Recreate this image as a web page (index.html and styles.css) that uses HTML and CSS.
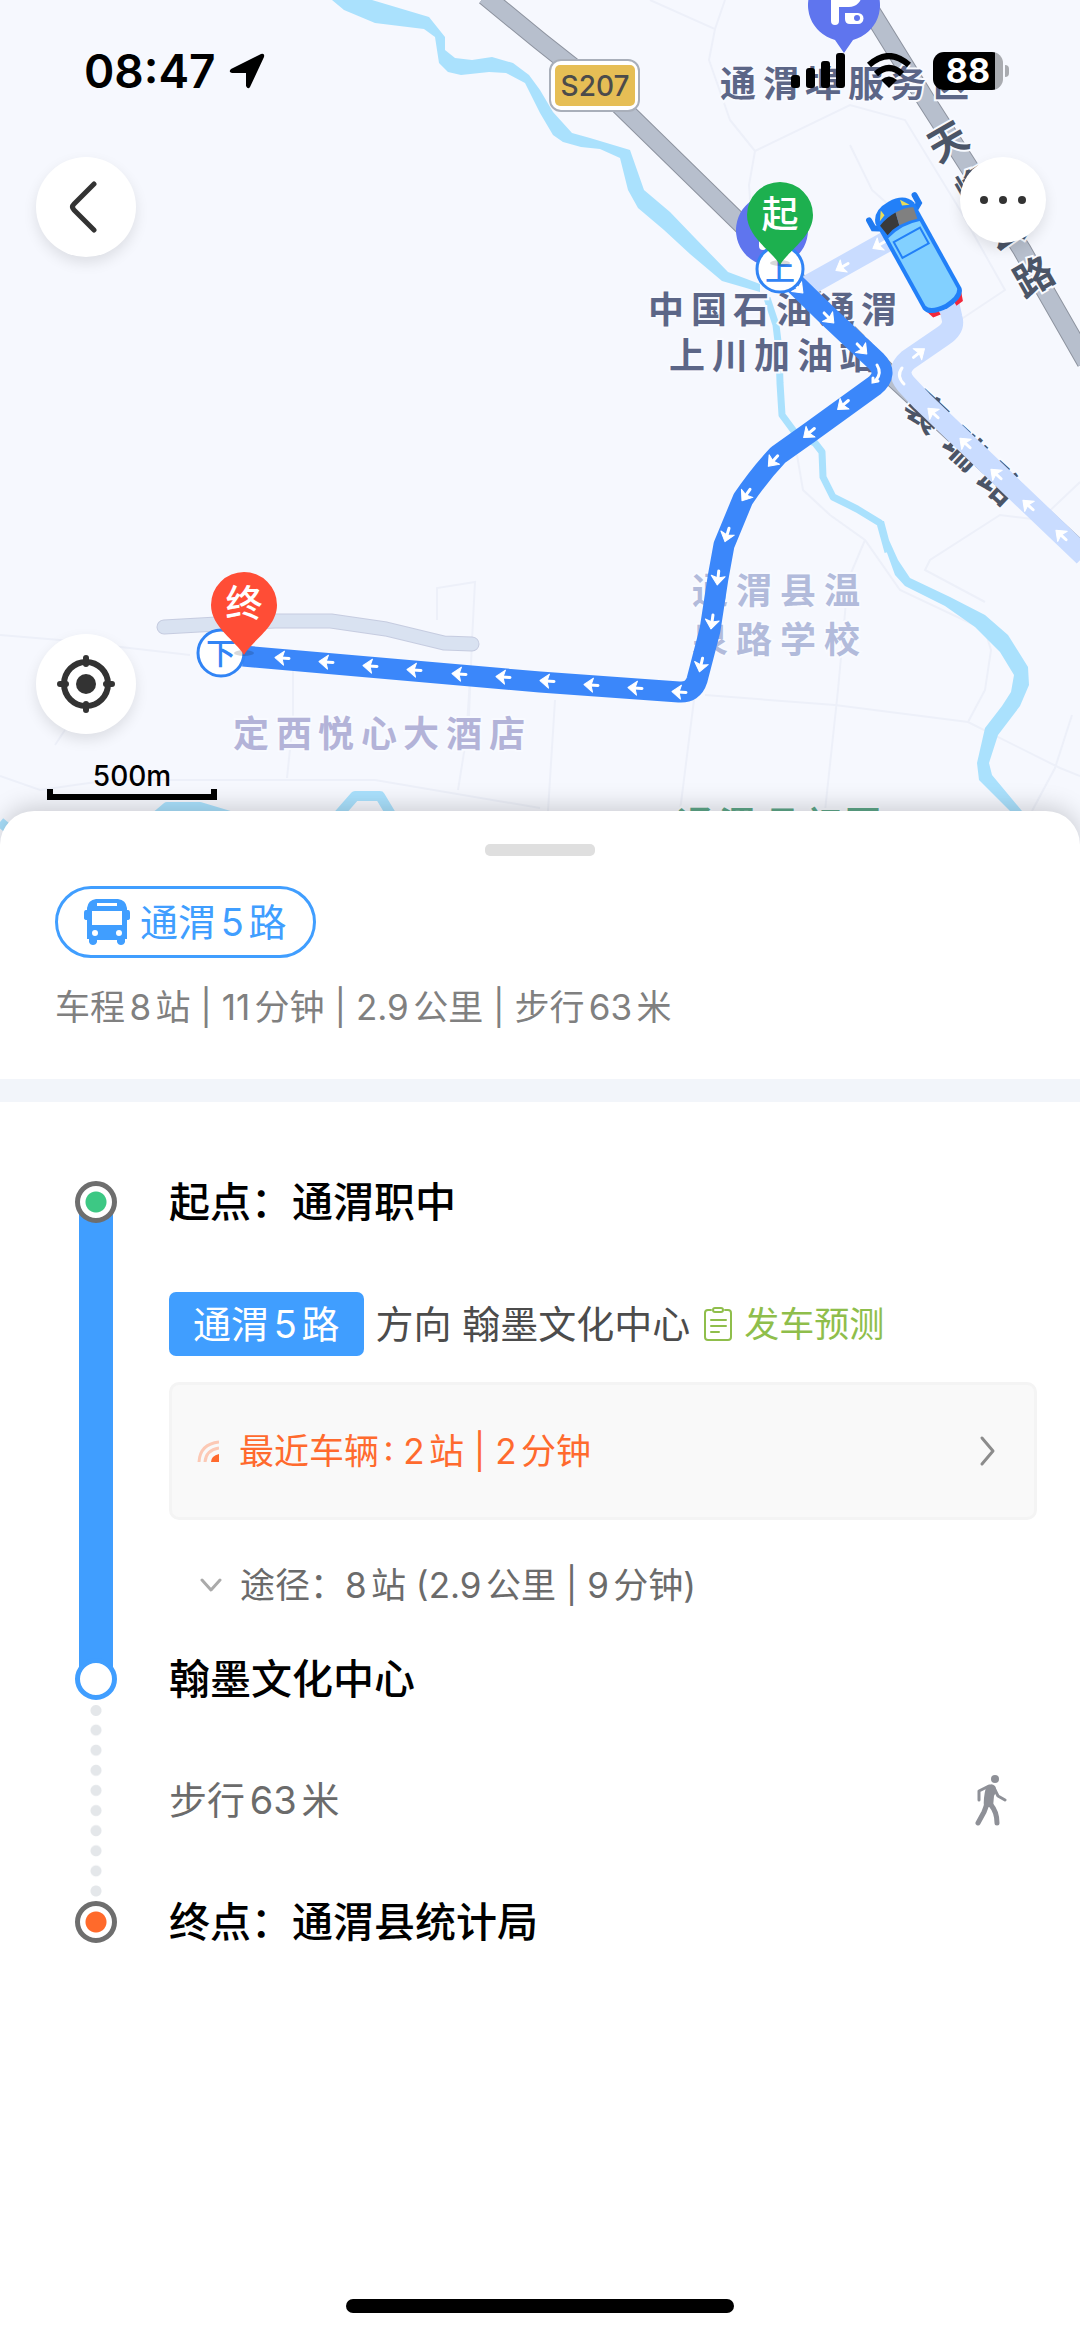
FILE: index.html
```html
<!DOCTYPE html>
<html lang="zh-CN">
<head>
    <meta charset="UTF-8">
    <meta name="viewport" content="width=device-width, initial-scale=1.0">
    <title>通渭5路</title>
    <link rel="stylesheet" href="styles.css">
</head>
<body>
    <section class="map">
        <svg class="map-canvas" viewBox="0 0 1080 840">
            <defs>
                <g id="arrow">
                    <path d="M-7 0H1" stroke="#fff" stroke-width="3" stroke-linecap="round"/>
                    <path d="M7 0L-2 -7L0 0L-2 7Z" fill="#fff" stroke="#fff" stroke-linejoin="round"/>
                </g>
                <g id="pin">
                    <path d="M0 50C-8 36 -33 22 -33 0A33 33 0 0 1 33 0C33 22 8 36 0 50Z"/>
                </g>
                <g id="poi">
                    <path d="M0 48L-9 35A36 36 0 1 1 9 35Z" fill="#5f75ee"/>
                    <path d="M-9 16V-20H5A9 9 0 0 1 5 -2H-9" fill="none" stroke="#fff" stroke-width="8" stroke-linecap="round" stroke-linejoin="round"/>
                    <path d="M1 8H14A5 5 0 0 1 14 19H6Q1 19 1 14Z" fill="#fff"/>
                    <circle cx="13" cy="13" r="3" fill="#5f75ee"/>
                </g>
            </defs>

            <!-- minor roads -->
            <g class="minor">
                <path d="M650 0L715 29L709 60L730 120L755 151L749 185L752 225"/>
                <path d="M755 151L850 105L905 120L960 210L1005 290L960 320"/>
                <path d="M725 0L715 29"/>
                <path d="M850 145L872 190L900 215"/>
                <path d="M797 455L803 490L830 515L865 540L900 590L985 630L991 650L985 690L968 722"/>
                <path d="M865 540L848 580L838 690L825 811"/>
                <path d="M1080 482L1040 520L1000 515L930 560L925 570L985 602"/>
                <path d="M705 695L835 705L968 722L1060 768L1080 776"/>
                <path d="M694 700L680 811M555 700L548 811"/>
                <path d="M1072 715L1055 768L1032 811"/>
                <path d="M0 635L60 640L190 655"/>
                <path d="M0 776L40 790L110 780L375 780L540 808"/>
                <path d="M293 660V720L287 778M470 680L466 740L458 790"/>
                <path d="M437 620V588L475 582L472 640L468 740"/>
                <path d="M65 730L55 745"/>
            </g>

            <!-- river -->
            <path class="water" d="M332 0L344 10L375 23L424 29L435 37L439 63L448 72L461 75L489 72L506 73L525 83L540 113L553 135L563 142L581 147L600 149L620 158L628 190L638 208L664 230L690 254L722 281L760 292L760 284L728 272L695 238L670 212L644 190L630 150L590 138L572 133L553 112L540 90L529 75L513 63L492 57L472 60L455 58L445 50V37L429 17L372 0Z"/>
            <path class="river" d="M767 298L776 325L779 350L780 383L782 415L796 434L815 443L822 452L823 477L833 497L857 509L880 523L888 552"/>
            <path class="water" d="M878 521L886 550L895 575L905 586L945 606L975 627L1000 652L1014 675L1011 692L1002 706L985 728L977 763L979 780L1010 811H1022L992 775L989 763L998 735L1020 706L1029 685L1028 667L1008 635L985 615L950 597L910 578L898 560L889 540L884 521Z"/>
            <path class="river wide" d="M0 822L12 832M154 818L167 807H200L250 822M334 820L355 796H380L392 816"/>

            <!-- trunk roads -->
            <path class="road-edge" d="M485 -4L540 41L612 98L741 224L889 374L1084 554M858 -10L926 100L1022 250L1086 362"/>
            <path class="road" d="M485 -4L540 41L612 98L741 224L889 374L1084 554M858 -10L926 100L1022 250L1086 362"/>
            <path class="lane-edge" d="M164 627L217 624L275 621H331L386 629L444 643L472 644"/>
            <path class="lane" d="M164 627L217 624L275 621H331L386 629L444 643L472 644"/>

            <use href="#poi" x="844" y="5"/>
            <use href="#poi" x="772" y="230"/>

            <g class="label">
                <text x="720 763 805 848 890 933" y="97">通渭埠服务区</text>
                <text x="648 691 733 776 819 861" y="323">中国石油通渭</text>
                <text x="669 712 754 797 839" y="369">上川加油站</text>
            </g>
            <g class="label soft">
                <text x="692 736 780 824" y="604">通渭县温</text>
                <text x="692 736 780 824" y="653">泉路学校</text>
            </g>
            <g class="label hotel">
                <text x="233 276 318 361 403 446 489" y="747">定西悦心大酒店</text>
            </g>
            <g class="label park">
                <text x="677 719 764 806 845" y="838">通渭县初园</text>
            </g>
            <g class="label road-name">
                <text transform="translate(948 142) rotate(-30)" y="14">天</text>
                <text transform="translate(976 187) rotate(-30)" y="14">巉</text>
                <text transform="translate(1005 231) rotate(-30)" y="14">公</text>
                <text transform="translate(1034 277) rotate(-30)" y="14">路</text>
                <text transform="translate(926 412) rotate(43)" y="14">襄</text>
                <text transform="translate(964 449) rotate(43)" y="14">瑞</text>
                <text transform="translate(1000 484) rotate(43)" y="14">路</text>
            </g>

            <!-- rest of the line, then the ridden part -->
            <path class="line-rest" d="M800 290L884 243L905 230M948 300L952 318Q955 328 943 336L908 360Q895 371 906 384L922 401L1084 556"/>
            <path class="line-ride" d="M791 280L829 317L876 361Q889 374 874 386L809 433L778 455Q760 474 743 499L724 545L718 578L710 630L697 680Q693 693 679 692L540 682L243 656"/>

            <g>
                <use href="#arrow" transform="translate(842 267) rotate(150)"/>
                <use href="#arrow" transform="translate(879 245) rotate(150)"/>
                <use href="#arrow" transform="translate(919 353) rotate(-38)"/>
                <use href="#arrow" transform="translate(933 413) rotate(223)"/>
                <use href="#arrow" transform="translate(965 443) rotate(223)"/>
                <use href="#arrow" transform="translate(996 474) rotate(223)"/>
                <use href="#arrow" transform="translate(1028 505) rotate(223)"/>
                <use href="#arrow" transform="translate(1061 535) rotate(223)"/>
                <use href="#arrow" transform="translate(798 288) rotate(45)"/>
                <use href="#arrow" transform="translate(829 318) rotate(46)"/>
                <use href="#arrow" transform="translate(862 349) rotate(46)"/>
                <use href="#arrow" transform="translate(843 405) rotate(140)"/>
                <use href="#arrow" transform="translate(809 433) rotate(140)"/>
                <use href="#arrow" transform="translate(773 461) rotate(132)"/>
                <use href="#arrow" transform="translate(746 495) rotate(125)"/>
                <use href="#arrow" transform="translate(727 535) rotate(107)"/>
                <use href="#arrow" transform="translate(718 578) rotate(96)"/>
                <use href="#arrow" transform="translate(712 622) rotate(98)"/>
                <use href="#arrow" transform="translate(701 665) rotate(103)"/>
                <use href="#arrow" transform="translate(679 692) rotate(184)"/>
                <use href="#arrow" transform="translate(635 688) rotate(184)"/>
                <use href="#arrow" transform="translate(591 685) rotate(184)"/>
                <use href="#arrow" transform="translate(547 681) rotate(184)"/>
                <use href="#arrow" transform="translate(503 677) rotate(184)"/>
                <use href="#arrow" transform="translate(459 674) rotate(184)"/>
                <use href="#arrow" transform="translate(414 670) rotate(184)"/>
                <use href="#arrow" transform="translate(370 666) rotate(184)"/>
                <use href="#arrow" transform="translate(326 662) rotate(184)"/>
                <use href="#arrow" transform="translate(282 658) rotate(184)"/>
                <path class="bend" d="M877 365Q882 373 876 380M873 378L873 382L878 381M902 368Q896 376 904 384"/>
            </g>

            <!-- bus -->
            <g transform="translate(918 255) rotate(-29)">
                <path d="M-21 50L-17 62L-9 63V54ZM21 50L17 62L9 63V54Z" fill="#f2283c"/>
                <path d="M-21 -42L-26 -45V-54M21 -42L26 -45V-54" fill="none" stroke="#1f7af0" stroke-width="6" stroke-linecap="round"/>
                <path d="M-22 -48Q-18 -61 0 -61T22 -48V50Q20 60 0 61Q-20 60 -22 50Z" fill="#2280f8"/>
                <path d="M-18 -29Q0 -35 18 -29V48Q16 55 0 56Q-16 55 -18 48Z" fill="#82d0ff"/>
                <path d="M-19 -44Q-10 -48 1 -48L-2 -35Q-10 -35 -17 -32Z" fill="#3a3a3a"/>
                <path d="M1 -48Q12 -48 19 -44L17 -32Q8 -35 -2 -35Z" fill="#808080"/>
                <path d="M-17 -48L-11 -57L-10 -51ZM17 -48L11 -57L10 -51Z" fill="#e8dc5a"/>
                <rect x="-15" y="-23" width="30" height="18" fill="none" stroke="#2280f8" stroke-width="2"/>
            </g>

            <!-- stops and pins -->
            <g class="stop">
                <circle cx="780" cy="269" r="23"/>
                <text x="780" y="280">上</text>
                <circle cx="221" cy="653" r="23"/>
                <text x="221" y="664">下</text>
            </g>
            <ellipse cx="780" cy="263" rx="10" ry="3" fill="#000" opacity=".15"/>
            <ellipse cx="244" cy="653" rx="10" ry="3" fill="#000" opacity=".15"/>
            <use href="#pin" x="780" y="215" fill="#1db04f"/>
            <use href="#pin" x="244" y="605" fill="#ff4d36"/>
            <g class="pin-text">
                <text x="780" y="228">起</text>
                <text x="244" y="617">终</text>
            </g>

            <!-- road shield -->
            <rect x="550" y="60" width="89" height="51" rx="11" fill="#fff" stroke="#a9afba" stroke-width="2"/>
            <rect x="555" y="65" width="80" height="41" rx="5" fill="#e6be55"/>
            <text class="shield" x="595" y="96">S207</text>
        </svg>

        <div class="overlay">
            <header class="status">
                <div class="status-side">
                    <span class="time">08:47</span>
                    <svg width="38" height="38" viewBox="0 0 38 38"><path d="M3 17L33 2Q37 1 36 5L22 35Q20 38 18 34V21H4Q0 20 3 17Z"/></svg>
                </div>
                <div class="status-side right">
                    <svg width="54" height="36" viewBox="0 0 54 36"><rect y="22" width="9" height="13" rx="3"/><rect x="15" y="15" width="9" height="20" rx="3"/><rect x="30" y="8" width="9" height="27" rx="3"/><rect x="45" width="9" height="35" rx="3"/></svg>
                    <svg width="46" height="36" viewBox="0 0 46 36"><path d="M3 12Q23 -6 43 12M10 21Q23 9 36 21" fill="none" stroke="#000" stroke-width="6"/><path d="M23 35L15 27Q23 20 31 27Z"/></svg>
                    <span class="battery"><span class="level">88</span></span>
                </div>
            </header>
            <nav class="nav">
                <button class="round" aria-label="返回">
                    <svg width="34" height="56" viewBox="0 0 34 56"><path d="M25 5L5 25Q2 28 5 31L25 51" fill="none" stroke="#333" stroke-width="5" stroke-linecap="round"/></svg>
                </button>
                <button class="round small" aria-label="更多">
                    <svg width="48" height="10" viewBox="0 0 48 10" fill="#333"><circle cx="5" cy="5" r="4"/><circle cx="24" cy="5" r="4"/><circle cx="43" cy="5" r="4"/></svg>
                </button>
            </nav>
            <button class="round locate" aria-label="定位">
                <svg width="58" height="58" viewBox="0 0 58 58"><circle cx="29" cy="29" r="22" fill="none" stroke="#333" stroke-width="6"/><circle cx="29" cy="29" r="10" fill="#333"/><path d="M29 3V9M29 49V55M3 29H9M49 29H55" stroke="#333" stroke-width="6" stroke-linecap="round"/></svg>
            </button>
            <div class="scale">500m</div>
        </div>
    </section>

    <main class="sheet">
        <div class="handle"></div>
        <section class="summary">
            <div class="badge">
                <svg width="46" height="46" viewBox="0 0 46 46"><path fill="#409eff" fill-rule="evenodd" d="M12 0H34Q42 1 43 9V11H44Q46 11 46 14V19Q46 21 43 21V40H41V43Q40 46 37 46Q34 46 33 43V41H13V43Q12 46 9 46Q6 46 5 43V40H3V21Q0 21 0 19V14Q0 11 2 11H3V9Q4 1 12 0ZM13 4V7H33V4ZM8 12V26H38V12ZM11 31A3 3 0 1 0 11 37A3 3 0 1 0 11 31ZM35 31A3 3 0 1 0 35 37A3 3 0 1 0 35 31Z"/></svg>
                <span>通渭5路</span>
            </div>
            <p class="facts">车程8站 | 11分钟 | 2.9公里 | 步行63米</p>
        </section>

        <ol class="steps">
            <li class="step stop-row first">
                <div class="rail"><span class="dot green"></span></div>
                <h2>起点：通渭职中</h2>
            </li>
            <li class="step ride">
                <div class="rail"></div>
                <div class="ride-info">
                    <div class="line">
                        <span class="tag">通渭5路</span>
                        <span class="direction">方向 翰墨文化中心</span>
                        <a class="forecast" href="#">
                            <svg width="28" height="34" viewBox="0 0 28 34" fill="none" stroke="#8fbe4b" stroke-width="2" stroke-linecap="round"><path d="M7 3H4Q1 3 1 6V30Q1 33 4 33H24Q27 33 27 30V6Q27 3 24 3H21M7 13H22M7 19H22M7 25H15"/><rect x="9" y="1" width="10" height="4" rx="2"/></svg>
                            发车预测
                        </a>
                    </div>
                    <button class="nearest">
                        <svg width="22" height="22" viewBox="0 0 22 22"><path d="M22 22H14Q14 16 22 14Z" fill="#ff6a2e"/><path d="M8 22Q9 10 22 8M2 22Q3 4 22 2" fill="none" stroke="#fcc9b5" stroke-width="3"/></svg>
                        <span>最近车辆: 2站 | 2分钟</span>
                        <svg class="more" width="16" height="32" viewBox="0 0 16 32"><path d="M3 3L14 16L3 29" fill="none" stroke="#8c8c8c" stroke-width="3" stroke-linecap="round" stroke-linejoin="round"/></svg>
                    </button>
                    <button class="via">
                        <svg width="22" height="16" viewBox="0 0 22 16"><path d="M2 3L11 13L20 3" fill="none" stroke="#aaa" stroke-width="3" stroke-linecap="round" stroke-linejoin="round"/></svg>
                        <span>途径：8站 (2.9公里 | 9分钟)</span>
                    </button>
                </div>
            </li>
            <li class="step stop-row middle">
                <div class="rail"><span class="dot blue"></span></div>
                <h2>翰墨文化中心</h2>
            </li>
            <li class="step walk">
                <div class="rail"></div>
                <div class="walk-info">
                    <span>步行63米</span>
                    <svg width="32" height="52" viewBox="0 0 32 52" fill="none" stroke="#8e9097" stroke-linecap="round" stroke-linejoin="round"><circle cx="20" cy="5" r="4" fill="#8e9097" stroke="none"/><path d="M14 12L4 17V26" stroke-width="3"/><path d="M20 16L23 22L30 26" stroke-width="3"/><path d="M12 30L9 38L3 49M16 31Q22 38 22 49" stroke-width="5"/><path d="M11 13Q16 8 20 12Q23 16 19 22L18 33H9Q8 25 11 13Z" fill="#8e9097" stroke="none"/></svg>
                </div>
            </li>
            <li class="step stop-row last">
                <div class="rail"><span class="dot orange"></span></div>
                <h2>终点：通渭县统计局</h2>
            </li>
        </ol>
        <div class="home-bar"></div>
    </main>
</body>
</html>
```

FILE: styles.css
```css
* {
    box-sizing: border-box;
}
body {
    margin: 0;
    min-height: 100vh;
    display: flex;
    flex-direction: column;
    background-color: #f6f8fe;
    font-family: Inter, "Noto Sans CJK SC", sans-serif;
    text-autospace: normal;
    color: #000;
}
button {
    border: none;
    padding: 0;
    font: inherit;
    color: inherit;
    text-align: left;
    cursor: pointer;
}
svg {
    display: block;
    flex: none;
}

/* map */
.map {
    position: relative;
    overflow: hidden;
}
.map-canvas {
    width: 100%;
    height: auto;
}
.minor {
    fill: none;
    stroke: #edf0f9;
    stroke-width: 2;
}
.water {
    fill: #aae1fd;
}
.river {
    fill: none;
    stroke: #aae1fd;
    stroke-width: 7;
    stroke-linejoin: round;
}
.river.wide {
    stroke-width: 10;
}
.road-edge {
    fill: none;
    stroke: #8d939f;
    stroke-width: 19;
}
.road {
    fill: none;
    stroke: #b7bfcd;
    stroke-width: 17;
}
.lane-edge {
    fill: none;
    stroke: #c6cce0;
    stroke-width: 15;
    stroke-linecap: round;
    stroke-linejoin: round;
}
.lane {
    fill: none;
    stroke: #d9e2f1;
    stroke-width: 13;
    stroke-linecap: round;
    stroke-linejoin: round;
}
.line-rest {
    fill: none;
    stroke: #c9dcff;
    stroke-width: 21;
    stroke-linejoin: round;
}
.line-ride {
    fill: none;
    stroke: #3b87fa;
    stroke-width: 21;
    stroke-linejoin: round;
}
.bend {
    fill: none;
    stroke: #fff;
    stroke-width: 3;
    stroke-linecap: round;
}
.label {
    font-size: 36px;
    font-weight: 700;
    fill: #5c6687;
    stroke: #f8faff;
    stroke-width: 4;
    paint-order: stroke;
}
.label.soft {
    fill: #b2bbdb;
}
.label.hotel {
    fill: #b3b3d8;
}
.label.park {
    fill: #5fa88a;
}
.label.road-name {
    fill: #4b5567;
    font-size: 39px;
    text-anchor: middle;
}
.stop circle {
    fill: #fff;
    stroke: #3184f5;
    stroke-width: 3;
}
.stop text {
    fill: #3184f5;
    font-size: 30px;
    font-weight: 500;
    text-anchor: middle;
}
.pin-text {
    fill: #fff;
    font-size: 37px;
    font-weight: 500;
    text-anchor: middle;
}
.shield {
    fill: #4b4b4b;
    font-size: 28px;
    font-weight: 500;
    text-anchor: middle;
}

/* controls over the map */
.overlay {
    position: absolute;
    inset: 0;
    display: flex;
    flex-direction: column;
    padding-bottom: 40px;
}
.status {
    display: flex;
    justify-content: space-between;
    align-items: center;
    padding: 42px 71px 43px 84px;
}
.status-side {
    display: flex;
    align-items: center;
    gap: 12px;
}
.status-side.right {
    gap: 21px;
}
.time {
    font-size: 46px;
    line-height: 58px;
    font-weight: 600;
}
.battery {
    position: relative;
    width: 70px;
    border-radius: 11px;
    background: linear-gradient(to right, #000 88%, #a9abb0 88%);
    color: #fff;
    margin-right: 6px;
}
.battery::after {
    content: "";
    position: absolute;
    left: 72px;
    top: 13px;
    width: 4px;
    height: 12px;
    border-radius: 0 4px 4px 0;
    background-color: #a9abb0;
}
.level {
    display: block;
    font-size: 34px;
    line-height: 38px;
    font-weight: 700;
    text-align: center;
}
.nav {
    display: flex;
    justify-content: space-between;
    align-items: flex-start;
    padding: 14px 34px 0 36px;
}
.round {
    width: 100px;
    height: 100px;
    border-radius: 50%;
    background-color: #fff;
    box-shadow: 0 6px 14px rgba(0, 0, 0, 0.1);
    display: flex;
    align-items: center;
    justify-content: center;
}
.round.small {
    width: 86px;
    height: 86px;
}
.locate {
    margin: auto 0 27px 36px;
}
.scale {
    align-self: flex-start;
    margin-left: 47px;
    width: 170px;
    height: 39px;
    font-size: 28px;
    line-height: 30px;
    font-weight: 500;
    text-align: center;
    background:
        linear-gradient(#000, #000) left bottom / 6px 11px no-repeat,
        linear-gradient(#000, #000) right bottom / 6px 11px no-repeat,
        linear-gradient(#000, #000) left bottom / 100% 6px no-repeat;
}

/* bottom sheet */
.sheet {
    position: relative;
    flex: 1;
    display: flex;
    flex-direction: column;
    margin-top: -29px;
    padding-top: 33px;
    border-radius: 34px 34px 0 0;
    background-color: #fff;
    box-shadow: 0 -4px 24px rgba(0, 0, 0, 0.18);
}
.handle {
    align-self: center;
    width: 110px;
    height: 12px;
    border-radius: 5px;
    background-color: #dfdfdf;
}
.summary {
    padding: 30px 55px 47px;
    border-bottom: 23px solid #f2f5fa;
}
.badge {
    display: inline-flex;
    align-items: center;
    gap: 10px;
    height: 72px;
    padding: 0 26px;
    border: 3px solid #409eff;
    border-radius: 36px;
    color: #409eff;
    font-size: 38px;
    line-height: 60px;
    vertical-align: top;
}
.facts {
    margin: 24px 0 0;
    font-size: 35px;
    line-height: 50px;
    color: #808080;
}

/* trip steps */
.steps {
    list-style: none;
    margin: 0;
    padding: 59px 43px 59px 75px;
}
.step {
    display: grid;
    grid-template-columns: 42px 1fr;
    gap: 52px;
}
.rail {
    display: flex;
    align-items: center;
}
.stop-row {
    min-height: 82px;
}
.stop-row h2 {
    margin: 0;
    align-self: center;
    font-size: 41px;
    line-height: 60px;
    font-weight: 500;
}
.dot {
    width: 42px;
    height: 42px;
    border: 5px solid #6e6e6e;
    border-radius: 50%;
    background-color: #fff;
}
.dot.green {
    background-image: radial-gradient(circle, #3dc884 10px, #fff 11px);
}
.dot.orange {
    background-image: radial-gradient(circle, #ff6a2b 10px, #fff 11px);
}
.dot.blue {
    border-color: #409eff;
}
.first .rail {
    background: linear-gradient(#409eff, #409eff) center bottom / 34px 50% no-repeat;
}
.ride .rail {
    background: linear-gradient(#409eff, #409eff) center / 34px 100% no-repeat;
}
.middle .rail {
    background:
        linear-gradient(#409eff, #409eff) center top / 34px 50% no-repeat,
        radial-gradient(circle, #e4e7ea 5px, transparent 6px) center bottom / 42px 19px;
}
.walk .rail {
    background: radial-gradient(circle, #e4e7ea 5px, transparent 6px) center top / 42px 20px round;
}
/* the dots must not run on past the last stop */
.last .rail {
    background: radial-gradient(circle, #e4e7ea 5px, transparent 6px) center top / 42px 20px no-repeat;
}
.ride-info {
    display: flex;
    flex-direction: column;
    padding: 49px 0 28px;
}
.line {
    display: flex;
    align-items: center;
    font-size: 38px;
    line-height: 64px;
}
.tag {
    padding: 0 24px;
    border-radius: 7px;
    background-color: #409eff;
    color: #fff;
}
.direction {
    margin: 0 14px 0 12px;
    color: #4c4c4c;
}
.forecast {
    display: flex;
    align-items: center;
    gap: 12px;
    font-size: 35px;
    color: #8fbe4b;
    text-decoration: none;
}
.nearest {
    display: flex;
    align-items: center;
    gap: 20px;
    margin: 26px 0 40px;
    padding: 41px 39px 41px 25px;
    border: 3px solid #f4f4f4;
    border-radius: 10px;
    background-color: #f9f9f9;
    color: #ff6a2e;
    font-size: 35px;
    line-height: 50px;
}
.more {
    margin-left: auto;
}
.via {
    display: flex;
    align-items: center;
    gap: 18px;
    padding-left: 31px;
    background: none;
    color: #6b6b6b;
    font-size: 35px;
    line-height: 50px;
}
.walk-info {
    display: flex;
    align-items: center;
    justify-content: space-between;
    padding: 50px 30px 51px 0;
    font-size: 38px;
    line-height: 60px;
    color: #6b6b6b;
}
.home-bar {
    align-self: center;
    margin: auto 0 24px;
    width: 36%;
    height: 14px;
    border-radius: 7px;
    background-color: #000;
}
```
